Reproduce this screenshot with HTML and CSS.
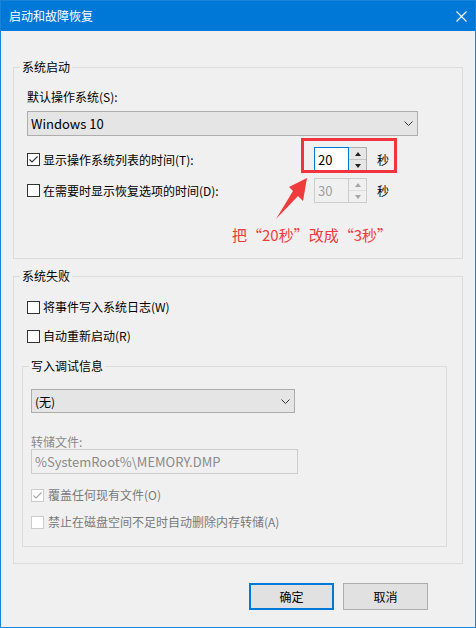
FILE: index.html
```html
<!DOCTYPE html>
<html lang="zh-CN">
<head>
<meta charset="utf-8">
<title>启动和故障恢复</title>
<link rel="stylesheet" href="styles.css">
</head>
<body>
<div class="window">
  <div class="titlebar">
    <span class="title">启动和故障恢复</span>
    <svg class="close" width="11" height="11" viewBox="0 0 11 11"><path d="M0.5 0.5 L10.5 10.5 M10.5 0.5 L0.5 10.5" stroke="#fff" stroke-width="1.1" fill="none"/></svg>
  </div>
  <div class="content">
    <fieldset class="group g1">
      <legend>系统启动</legend>
      <div class="g1-body">
        <div class="label">默认操作系统(S):</div>
        <div class="combo os-combo">
          <span>Windows 10</span>
          <svg class="chev" width="9" height="5" viewBox="0 0 9 5"><path d="M0.5 0.5 L4.5 4.5 L8.5 0.5" stroke="#333" stroke-width="1" fill="none"/></svg>
        </div>
        <div class="timer-row r1">
          <div class="check">
            <span class="box"><svg width="11" height="11" viewBox="0 0 11 11"><path d="M1.5 5.5 L4 8 L9.5 2.5" stroke="#333" stroke-width="1.1" fill="none"/></svg></span>
            <span>显示操作系统列表的时间(T):</span>
          </div>
          <div class="spin">
            <div class="spin-edit focus">20</div>
            <div class="spin-btns">
              <div class="sb"><span class="tri up"></span></div>
              <div class="sb"><span class="tri down"></span></div>
            </div>
          </div>
          <span class="unit">秒</span>
        </div>
        <div class="timer-row r2">
          <div class="check">
            <span class="box"></span>
            <span>在需要时显示恢复选项的时间(D):</span>
          </div>
          <div class="spin disabled">
            <div class="spin-edit">30</div>
            <div class="spin-btns">
              <div class="sb"><span class="tri up"></span></div>
              <div class="sb"><span class="tri down"></span></div>
            </div>
          </div>
          <span class="unit">秒</span>
        </div>
        <div class="note">把“20秒”改成“3秒”</div>
        <div class="redbox"></div>
        <svg class="arrow" width="40" height="48" viewBox="0 0 40 48"><polygon points="37,3 33,26 28,21 6,44 23,16 19,12" fill="#ef3b3b"/></svg>
      </div>
    </fieldset>

    <fieldset class="group g2">
      <legend>系统失败</legend>
      <div class="g2-body">
        <div class="check row-a">
          <span class="box"></span>
          <span>将事件写入系统日志(W)</span>
        </div>
        <div class="check row-b">
          <span class="box"></span>
          <span>自动重新启动(R)</span>
        </div>
        <fieldset class="group inner">
          <legend>写入调试信息</legend>
          <div class="inner-body">
            <div class="combo dbg-combo">
              <span>(无)</span>
              <svg class="chev" width="9" height="5" viewBox="0 0 9 5"><path d="M0.5 0.5 L4.5 4.5 L8.5 0.5" stroke="#333" stroke-width="1" fill="none"/></svg>
            </div>
            <div class="dump-label">转储文件:</div>
            <div class="textbox">%SystemRoot%\MEMORY.DMP</div>
            <div class="check dis row-c">
              <span class="box"><svg width="11" height="11" viewBox="0 0 11 11"><path d="M1.5 5.5 L4 8 L9.5 2.5" stroke="#a8a8a8" stroke-width="1.1" fill="none"/></svg></span>
              <span>覆盖任何现有文件(O)</span>
            </div>
            <div class="check dis row-d">
              <span class="box"></span>
              <span>禁止在磁盘空间不足时自动删除内存转储(A)</span>
            </div>
          </div>
        </fieldset>
      </div>
    </fieldset>

    <div class="buttons">
      <button class="btn default">确定</button>
      <button class="btn">取消</button>
    </div>
  </div>
</div>
</body>
</html>
```

FILE: styles.css
```css
* { box-sizing: border-box; }
html, body { margin: 0; padding: 0; }
body {
  width: 476px;
  height: 628px;
  background: #f0f0f0;
  font-family: "Noto Sans CJK SC", "Noto Sans", sans-serif;
  font-size: 12px;
  color: #000;
}
.window {
  width: 476px;
  height: 628px;
  border: 1px solid #1883d7;
  background: #f0f0f0;
  display: flex;
  flex-direction: column;
}
.titlebar {
  height: 30px;
  background: #0078d7;
  display: flex;
  align-items: center;
  justify-content: space-between;
  padding: 0 8px 0 8px;
  color: #fff;
}
.title { font-size: 12px; line-height: 30px; }
.close { display: block; margin-top: 1px; }

.content {
  padding: 28px 0 0 12px;
}
.group {
  margin: 0;
  padding: 0;
  border: 1px solid #dcdcdc;
  min-width: 0;
}
.group > legend {
  margin-left: 6px;
  padding: 0 2px;
  line-height: 16px;
  font-size: 12px;
}
.g1, .g2 { width: 450px; }
.g1-body {
  position: relative;
  padding: 14px 13px 13px 13px;
}
.label { line-height: 16px; }
.combo {
  display: flex;
  align-items: center;
  height: 25px;
  border: 1px solid #adadad;
  background: #e5e5e5;
  padding: 0 4px 0 3px;
}
.combo .chev { margin-left: auto; display: block; }
.os-combo { margin-top: 6px; width: 391px; font-size: 13px; }
.timer-row {
  display: flex;
  align-items: center;
  height: 25px;
}
.r1 { margin-top: 11px; }
.r2 { margin-top: 6px; }
.timer-row .check { width: 287px; }
.check {
  display: flex;
  align-items: center;
  gap: 3px;
  line-height: 16px;
}
.box {
  width: 13px;
  height: 13px;
  border: 1px solid #333;
  background: #fff;
  display: flex;
  align-items: center;
  justify-content: center;
  flex: none;
}
.box svg { display: block; }
.spin { display: flex; width: 53px; height: 25px; }
.spin-edit {
  width: 35px;
  height: 25px;
  border: 1px solid #0078d7;
  background: #fff;
  font-size: 13px;
  line-height: 23px;
  padding-left: 3px;
}
.spin-btns {
  width: 18px;
  height: 25px;
  border: 1px solid #adadad;
  border-left: none;
  display: flex;
  flex-direction: column;
  background: #e6e6e6;
}
.sb {
  flex: 1;
  display: flex;
  align-items: center;
  justify-content: center;
}
.sb + .sb { border-top: 1px solid #c4c4c4; }
.tri { width: 0; height: 0; border-left: 3.5px solid transparent; border-right: 3.5px solid transparent; }
.tri.up { border-bottom: 4px solid #222; }
.tri.down { border-top: 4px solid #222; }
.spin.disabled .spin-edit { border-color: #cccccc; background: #f0f0f0; color: #a0a0a0; }
.spin.disabled .spin-btns { border-color: #cccccc; background: #f0f0f0; }
.spin.disabled .sb + .sb { border-top-color: #dedede; }
.spin.disabled .tri.up { border-bottom-color: #a6a6a6; }
.spin.disabled .tri.down { border-top-color: #a6a6a6; }
.unit { margin-left: 10px; }
.note {
  margin-top: 22px;
  margin-left: 205px;
  line-height: 20px;
  font-size: 15px;
  color: #ef3b3b;
}
.redbox {
  position: absolute;
  left: 287px;
  top: 63px;
  width: 96px;
  height: 35px;
  border: 3px solid #f0333c;
}
.arrow {
  position: absolute;
  left: 256px;
  top: 100px;
  display: block;
}

.g2 { margin-top: 9px; }
.g2-body { padding: 15px 16px 16px 8px; }
.row-a { margin-left: 5px; }
.row-b { margin-top: 13px; margin-left: 5px; }
.inner { width: 425px; margin-top: 14px; }
.inner-body { padding: 15px 8px 16px 8px; }
.dbg-combo { width: 264px; height: 24px; }
.dump-label { margin-top: 22px; line-height: 14px; color: #8a8a8a; }
.textbox {
  width: 267px;
  height: 25px;
  border: 1px solid #cccccc;
  background: #f0f0f0;
  color: #8a8a8a;
  line-height: 23px;
  padding-left: 3px;
  font-size: 13px;
}
.check.dis { color: #7a7a7a; gap: 4px; }
.check.dis .box { border-color: #cccccc; background: #fff; }
.row-c { margin-top: 13px; }
.row-d { margin-top: 11px; }

.buttons {
  width: 450px;
  margin-top: 19px;
  display: flex;
  justify-content: flex-end;
  gap: 9px;
  padding-right: 35px;
}
.btn {
  width: 85px;
  height: 27px;
  background: #e1e1e1;
  border: 1px solid #adadad;
  font-family: "Noto Sans CJK SC", "Noto Sans", sans-serif;
  font-size: 12px;
  color: #000;
  padding: 0;
  margin: 0;
}
.btn.default { border: 2px solid #0078d7; }
```
